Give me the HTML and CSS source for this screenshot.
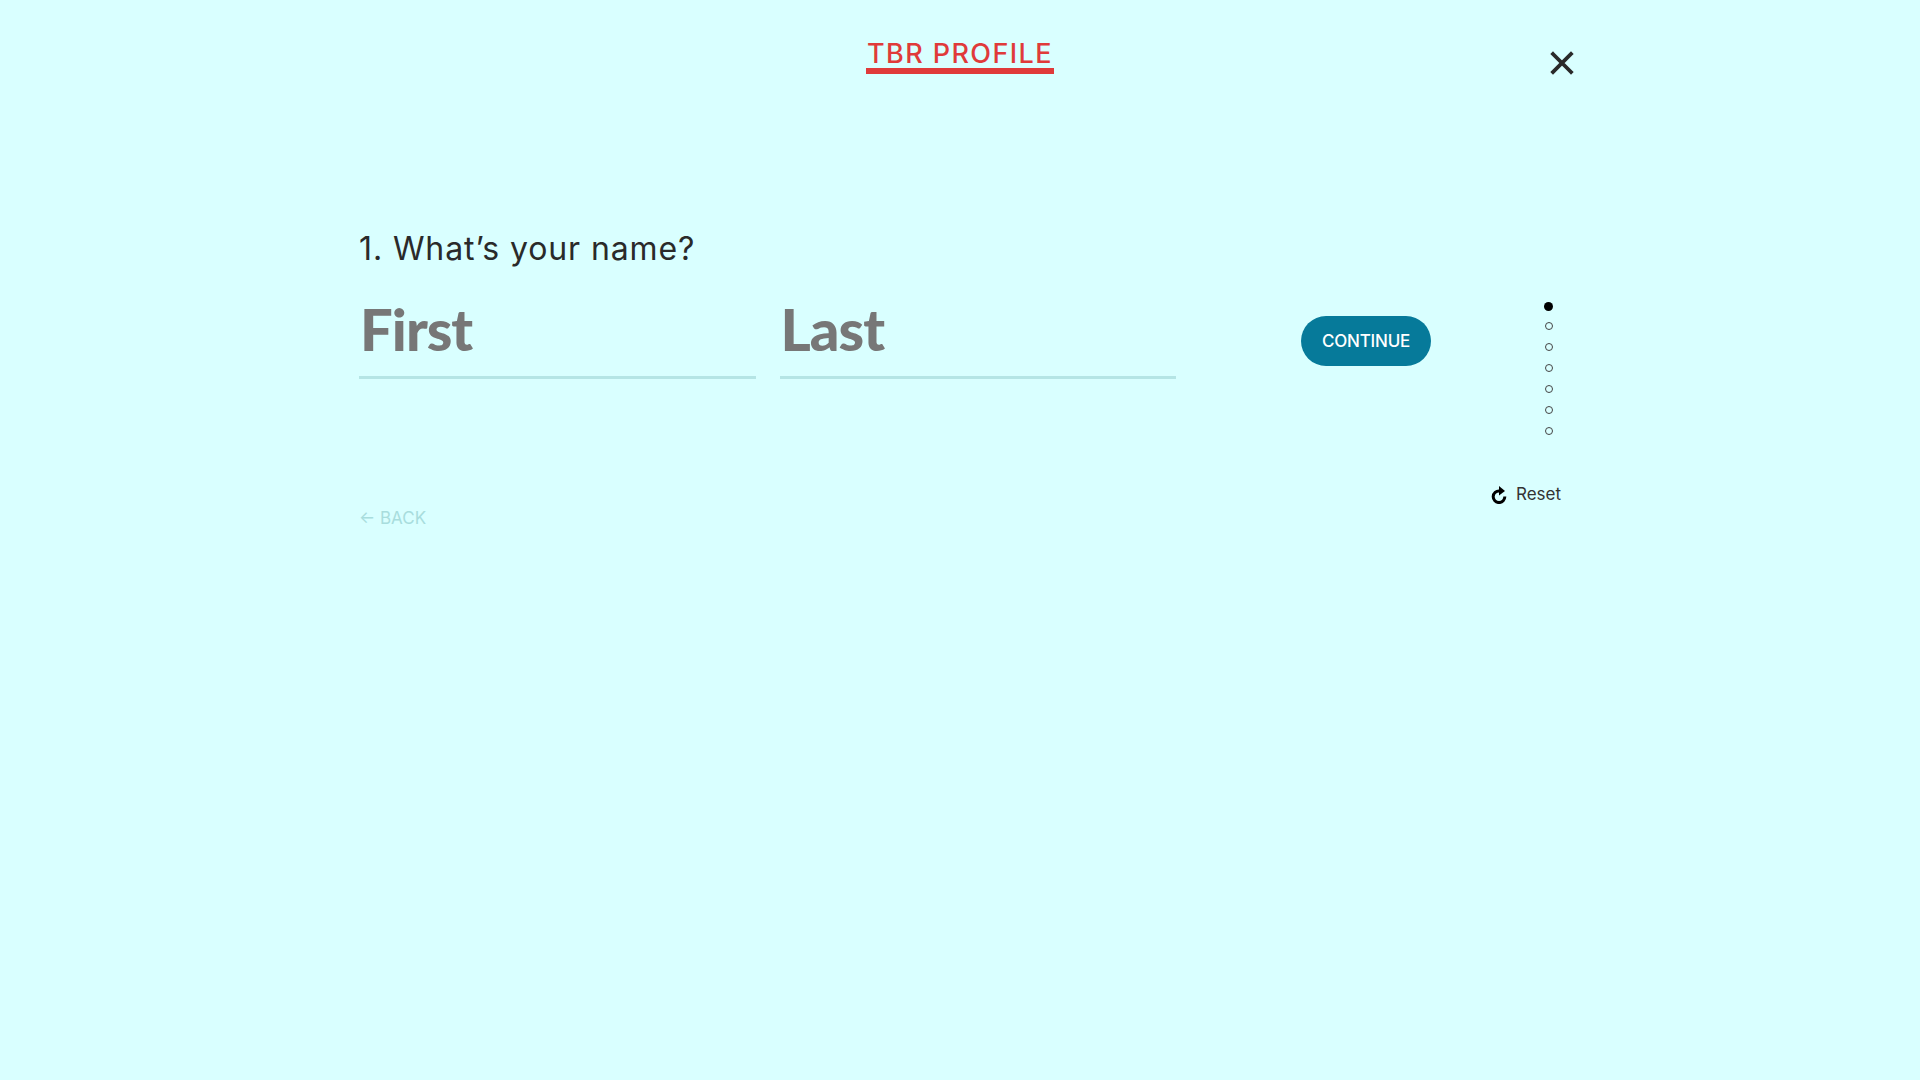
FILE: index.html
```html
<!DOCTYPE html>
<html lang="en">
<head>
<meta charset="utf-8">
<title>TBR Profile</title>
<link rel="stylesheet" href="styles.css">
</head>
<body>
<main class="modal">
  <header class="header">
    <h1 class="title">TBR PROFILE</h1>
    <button class="close" aria-label="Close">
      <svg viewBox="0 0 24 24" width="24" height="24"><path d="M3 3 L21 21 M21 3 L3 21" fill="none" stroke="#2a2a2a" stroke-width="3.8" stroke-linecap="square"/></svg>
    </button>
  </header>
  <h2 class="question">1. What’s your name?</h2>
  <section class="row">
    <div class="fields">
      <div class="field">First</div>
      <div class="field">Last</div>
    </div>
    <button class="continue">CONTINUE</button>
    <ul class="dots">
      <li class="dot active"></li>
      <li class="dot"></li>
      <li class="dot"></li>
      <li class="dot"></li>
      <li class="dot"></li>
      <li class="dot"></li>
      <li class="dot"></li>
    </ul>
  </section>
  <footer class="footer">
    <a class="back">← BACK</a>
    <a class="reset">
      <svg class="reset-icon" viewBox="0 0 16 18" width="16" height="18"><path d="M8.5 5 A5.8 5.8 0 1 0 13.8 10.5" fill="none" stroke="#000" stroke-width="3"/><path d="M8 0 L14 5 L8 9.5 Z" fill="#000"/></svg>
      <span>Reset</span>
    </a>
  </footer>
</main>
</body>
</html>
```
FILE: styles.css
```css
* { box-sizing: border-box; }
html, body { margin: 0; height: 100%; }
body {
  background: #d9ffff;
  font-family: Inter, "Liberation Sans", sans-serif;
  color: #2a2a2a;
  min-height: 1080px;
}
.modal { width: 1202px; margin-left: 359px; position: relative; }
.header { display: flex; justify-content: center; padding-top: 39px; height: 74px; }
.title {
  margin: 0;
  height: 35px;
  width: 188px;
  font-size: 27px;
  line-height: 29px;
  font-weight: 500;
  color: #e03a3a;
  text-align: center;
  letter-spacing: 1.4px;
  white-space: nowrap;
  border-bottom: 6px solid #e03a3a;
}
.close {
  position: absolute;
  left: 1191px;
  top: 51px;
  padding: 0;
  border: 0;
  background: none;
  width: 24px;
  height: 24px;
}
.close svg { display: block; }
.question {
  margin: 155px 0 0;
  font-size: 32px;
  line-height: 40px;
  font-weight: 400;
  color: #2a2a2a;
  letter-spacing: 0.9px;
}
.row { display: flex; align-items: flex-start; margin-top: 21px; height: 180px; }
.fields { display: flex; gap: 24px; }
.field {
  width: 396.5px;
  height: 89px;
  padding: 4px 0 0 1px;
  font-family: Lato, sans-serif;
  font-size: 58px;
  line-height: 70px;
  font-weight: 900;
  letter-spacing: -1px;
  color: #777;
  border-bottom: 3px solid #b5e5e5;
}
.continue {
  margin: 26px 0 0 125px;
  width: 130px;
  height: 50px;
  padding: 0;
  border: 0;
  border-radius: 25px;
  background: #067a9a;
  color: #fff;
  font-family: inherit;
  font-size: 17px;
  font-weight: 500;
  letter-spacing: -0.2px;
}
.dots { list-style: none; margin: 7px 0 0 112.5px; padding: 0; width: 10px; }
.dot { height: 21px; display: flex; align-items: center; justify-content: center; }
.dot.active { height: 18px; }
.dot::before {
  content: "";
  width: 6px;
  height: 6px;
  border-radius: 50%;
  border: 1.5px solid #444;
}
.dot.active::before { width: 9px; height: 9px; background: #000; border: 0; }
.footer { display: flex; justify-content: space-between; align-items: flex-start; margin-top: 13px; }
.back { margin-top: 24px; font-size: 17px; line-height: 22px; color: #a8dddd; }
.reset { display: flex; align-items: center; gap: 9px; font-size: 17px; line-height: 22px; color: #333; }
.reset-icon { display: block; margin-top: 1px; }
```
